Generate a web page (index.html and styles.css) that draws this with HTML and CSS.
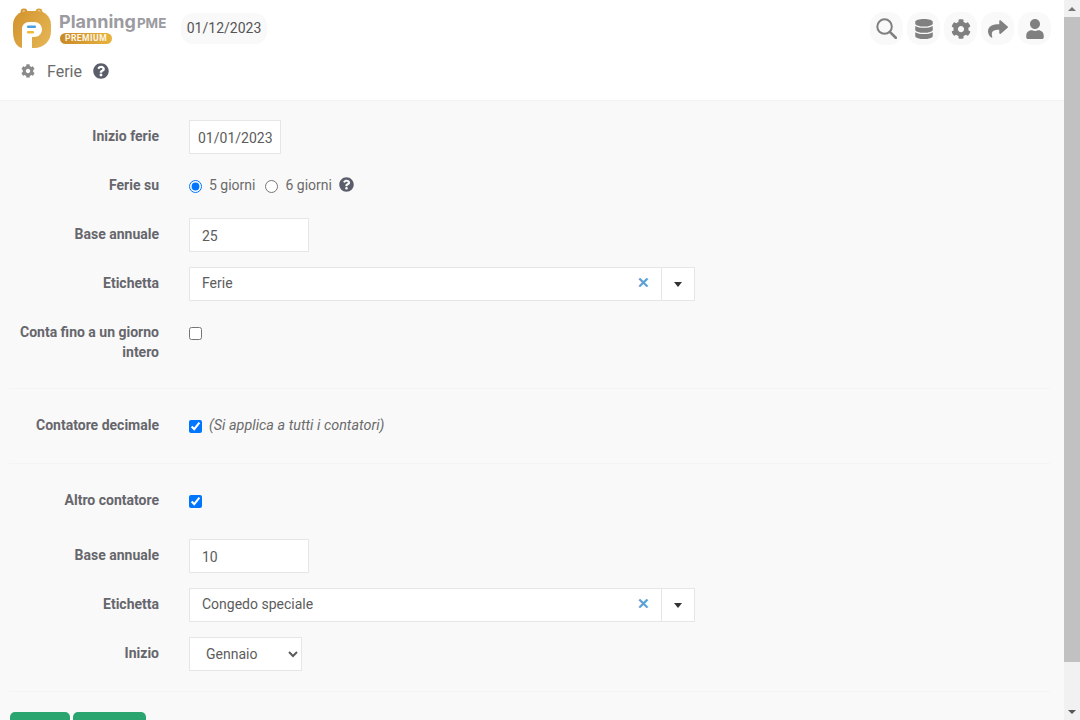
FILE: index.html
```html
<!DOCTYPE html>
<html lang="it">
<head>
    <meta charset="UTF-8">
    <meta name="viewport" content="width=device-width, initial-scale=1.0">
    <title>Ferie</title>
    <link rel="stylesheet" href="styles.css">
</head>
<body>
    <svg class="icon-defs" xmlns="http://www.w3.org/2000/svg">
        <symbol id="i-database" viewBox="0 0 448 512"><path d="M448 73.143v45.714C448 159.143 347.667 192 224 192S0 159.143 0 118.857V73.143C0 32.857 100.333 0 224 0s224 32.857 224 73.143zM448 176v102.857C448 319.143 347.667 352 224 352S0 319.143 0 278.857V176c48.125 33.143 136.208 48.572 224 48.572S399.874 209.143 448 176zm0 160v102.857C448 479.143 347.667 512 224 512S0 479.143 0 438.857V336c48.125 33.143 136.208 48.572 224 48.572S399.874 369.143 448 336z"/></symbol>
        <symbol id="i-cog" viewBox="0 0 512 512"><path d="M487.4 315.7l-42.6-24.6c4.3-23.2 4.3-47 0-70.2l42.6-24.6c4.9-2.8 7.1-8.6 5.5-14-11.1-35.6-30-67.8-54.7-94.6-3.8-4.1-10-5.1-14.8-2.3L380.8 110c-17.9-15.4-38.5-27.3-60.8-35.1V25.8c0-5.6-3.9-10.5-9.4-11.7-36.7-8.2-74.3-7.8-109.2 0-5.5 1.2-9.4 6.1-9.4 11.7V75c-22.2 7.9-42.8 19.8-60.8 35.1L88.7 85.5c-4.9-2.8-11-1.9-14.8 2.3-24.7 26.7-43.6 58.9-54.7 94.6-1.7 5.4.6 11.2 5.5 14L67.3 221c-4.3 23.2-4.3 47 0 70.2l-42.6 24.6c-4.9 2.8-7.1 8.6-5.5 14 11.1 35.6 30 67.8 54.7 94.6 3.8 4.1 10 5.1 14.8 2.3l42.6-24.6c17.9 15.4 38.5 27.3 60.8 35.1v49.2c0 5.6 3.9 10.5 9.4 11.7 36.7 8.2 74.3 7.8 109.2 0 5.5-1.2 9.4-6.1 9.4-11.7v-49.2c22.2-7.9 42.8-19.8 60.8-35.1l42.6 24.6c4.9 2.8 11 1.9 14.8-2.3 24.7-26.7 43.6-58.9 54.7-94.6 1.5-5.5-.7-11.3-5.6-14.1zM256 336c-44.1 0-80-35.9-80-80s35.9-80 80-80 80 35.9 80 80-35.9 80-80 80z"/></symbol>
        <symbol id="i-share" viewBox="0 0 512 512"><path d="M503.691 189.836L327.687 37.851C312.281 24.546 288 35.347 288 56.015v80.053C127.371 137.907 0 170.1 0 322.326c0 61.441 39.581 122.309 83.333 154.132 13.653 9.931 33.111-2.533 28.077-18.631C66.066 312.814 132.917 274.316 288 272.085V360c0 20.7 24.3 31.453 39.687 18.164l176.004-152c11.071-9.562 11.086-26.753 0-36.328z"/></symbol>
        <symbol id="i-user" viewBox="0 0 448 512"><path d="M224 256c70.7 0 128-57.3 128-128S294.7 0 224 0 96 57.3 96 128s57.3 128 128 128zm89.6 32h-16.7c-22.2 10.2-46.9 16-72.9 16s-50.6-5.8-72.9-16h-16.7C60.2 288 0 348.2 0 422.4V464c0 26.5 21.5 48 48 48h352c26.5 0 48-21.5 48-48v-41.6c0-74.2-60.2-134.4-134.4-134.4z"/></symbol>
        <symbol id="i-help" viewBox="0 0 512 512"><path d="M504 256c0 136.997-111.043 248-248 248S8 392.997 8 256C8 119.083 119.043 8 256 8s248 111.083 248 248zM262.655 90c-54.497 0-89.255 22.957-116.549 63.758-3.536 5.286-2.353 12.415 2.715 16.258l34.699 26.31c5.205 3.947 12.621 3.008 16.665-2.122 17.864-22.658 30.113-35.797 57.303-35.797 20.429 0 45.698 13.148 45.698 32.958 0 14.976-12.363 22.667-32.534 33.976C247.128 238.528 216 254.941 216 296v4c0 6.627 5.373 12 12 12h56c6.627 0 12-5.373 12-12v-1.333c0-28.462 83.186-29.647 83.186-106.667 0-58.002-60.165-102-116.531-102zM256 338c-25.365 0-46 20.635-46 46 0 25.364 20.635 46 46 46s46-20.636 46-46c0-25.365-20.635-46-46-46z"/></symbol>
        <linearGradient id="logo-gold" x1="0" y1="0" x2="1" y2="0.6">
            <stop offset="0" stop-color="#d2922c"/>
            <stop offset="1" stop-color="#e3b251"/>
        </linearGradient>
    </svg>

    <div class="page">
        <header class="page-header">
            <div class="topbar">
                <div class="brand">
                    <svg class="brand-logo" viewBox="0 0 38 40">
                        <circle cx="11" cy="4" r="2.6" fill="#f4e3c0" stroke="#d2922c" stroke-width="1.6"/>
                        <circle cx="26" cy="4" r="2.6" fill="#f4e3c0" stroke="#d9a03c" stroke-width="1.6"/>
                        <path d="M14 3h10c8 0 14 6 14 14v6c0 10-7 17-17 17H10C4 40 0 33 0 24v-7C0 9 6 3 14 3z" fill="url(#logo-gold)"/>
                        <path d="M9 21c0-4 3-7 7-7h5c5 0 8 3.500 8 7.500S26 29 21 29h-2v11H9z" fill="#fff"/>
                        <rect x="14" y="17.500" width="9" height="2.400" rx="1" fill="#4a9fe0"/>
                        <rect x="14" y="23" width="7" height="2.400" rx="1" fill="#f0b93a"/>
                    </svg>
                    <div class="brand-text">
                        <div class="brand-name">Planning<span class="brand-suffix">PME</span></div>
                        <span class="brand-badge">PREMIUM</span>
                    </div>
                </div>
                <div class="date-pill">01/12/2023</div>
                <nav class="tools">
                    <a class="tool-btn">
                        <svg class="tool-search" viewBox="0 0 24 24" fill="none" stroke="currentColor" stroke-width="2.3">
                            <circle cx="9.800" cy="9.800" r="8.300"/>
                            <path d="M15.800 15.800L22.600 22.600" stroke-linecap="round" stroke-width="3"/>
                        </svg>
                    </a>
                    <a class="tool-btn"><svg class="tool-icon"><use href="#i-database"/></svg></a>
                    <a class="tool-btn"><svg class="tool-icon"><use href="#i-cog"/></svg></a>
                    <a class="tool-btn"><svg class="tool-icon"><use href="#i-share"/></svg></a>
                    <a class="tool-btn"><svg class="tool-icon"><use href="#i-user"/></svg></a>
                </nav>
            </div>
            <div class="title-row">
                <svg class="title-cog"><use href="#i-cog"/></svg>
                <h1 class="page-title">Ferie</h1>
                <svg class="help-icon help-title"><use href="#i-help"/></svg>
            </div>
        </header>

        <form class="settings">
            <div class="form-row">
                <label class="form-label">Inizio ferie</label>
                <input type="text" class="input input-date" value="01/01/2023">
            </div>
            <div class="form-row">
                <label class="form-label">Ferie su</label>
                <div class="choices">
                    <input type="radio" name="days" class="tick" checked>
                    <span class="choice-text">5 giorni</span>
                    <input type="radio" name="days" class="tick tick-second">
                    <span class="choice-text">6 giorni</span>
                    <svg class="help-icon help-inline"><use href="#i-help"/></svg>
                </div>
            </div>
            <div class="form-row">
                <label class="form-label">Base annuale</label>
                <input type="text" class="input input-number" value="25">
            </div>
            <div class="form-row">
                <label class="form-label">Etichetta</label>
                <div class="combo">
                    <span class="combo-value">Ferie</span>
                    <span class="combo-clear">&#10005;</span>
                    <span class="combo-toggle"><i class="caret"></i></span>
                </div>
            </div>
            <div class="form-row form-row-last">
                <label class="form-label">Conta fino a un giorno intero</label>
                <div class="choices"><input type="checkbox" class="tick"></div>
            </div>

            <hr class="divider">

            <div class="form-row form-row-last">
                <label class="form-label">Contatore decimale</label>
                <div class="choices">
                    <input type="checkbox" class="tick" checked>
                    <em class="choice-note">(Si applica a tutti i contatori)</em>
                </div>
            </div>

            <hr class="divider">

            <div class="form-row form-row-wide">
                <label class="form-label">Altro contatore</label>
                <div class="choices"><input type="checkbox" class="tick" checked></div>
            </div>
            <div class="form-row">
                <label class="form-label">Base annuale</label>
                <input type="text" class="input input-number" value="10">
            </div>
            <div class="form-row">
                <label class="form-label">Etichetta</label>
                <div class="combo">
                    <span class="combo-value">Congedo speciale</span>
                    <span class="combo-clear">&#10005;</span>
                    <span class="combo-toggle"><i class="caret"></i></span>
                </div>
            </div>
            <div class="form-row form-row-last">
                <label class="form-label">Inizio</label>
                <select class="input input-select">
                    <option>Gennaio</option>
                </select>
            </div>

            <hr class="divider">

            <div class="actions">
                <button type="button" class="btn btn-first"></button>
                <button type="button" class="btn btn-second"></button>
            </div>
        </form>
    </div>

    <div class="scrollbar">
        <div class="scroll-arrow"><i class="arrow-up"></i></div>
        <div class="scroll-thumb"></div>
        <div class="scroll-rest"></div>
        <div class="scroll-arrow"><i class="arrow-down"></i></div>
    </div>
</body>
</html>
```

FILE: styles.css
```css
* {
    box-sizing: border-box;
}

html, body {
    height: 100%;
}

body {
    margin: 0;
    display: flex;
    overflow: hidden;
    background: #f9f9f9;
    font-family: Roboto, "Liberation Sans", sans-serif;
    font-size: 14px;
    color: #555;
}

.icon-defs {
    width: 0;
    height: 0;
    display: block;
    flex: none;
}

.page {
    flex: 1;
    min-width: 0;
    height: 100%;
    overflow: hidden;
}

/* header */
.page-header {
    height: 101px;
    background: white;
    border-bottom: 1px solid #f2f2f2;
}

.topbar {
    display: flex;
    align-items: flex-start;
    height: 52px;
    padding: 8px 13px 0 13px;
}

.brand {
    display: flex;
    gap: 8px;
    width: 168px;
}

.brand-logo {
    width: 38px;
    height: 40px;
    flex: none;
}

.brand-text {
    display: flex;
    flex-direction: column;
    align-items: flex-start;
}

.brand-name {
    font-family: Inter, sans-serif;
    font-weight: 700;
    font-size: 18px;
    line-height: 28px;
    height: 25px;
    color: #9b9ba1;
    white-space: nowrap;
}

.brand-suffix {
    font-size: 13.5px;
    margin-left: 1px;
}

.brand-badge {
    width: 52px;
    height: 11px;
    margin-left: 1px;
    border-radius: 6px;
    background: linear-gradient(90deg, #c98a26, #e8b33f);
    color: #fdf6e6;
    font-size: 8.5px;
    font-weight: 700;
    line-height: 11px;
    letter-spacing: 0.5px;
    text-align: center;
}

.date-pill {
    margin-top: 5px;
    width: 86px;
    height: 31px;
    border-radius: 12px;
    background: #f9f9f9;
    color: #555;
    line-height: 31px;
    text-align: center;
}

.tools {
    margin-left: auto;
    display: flex;
    gap: 4px;
    margin-top: 4px;
}

.tool-btn {
    width: 33px;
    height: 33px;
    border-radius: 14px;
    background: #f9f9f9;
    color: #808080;
    display: flex;
    align-items: center;
    justify-content: center;
}

.tool-icon {
    width: 20px;
    height: 20px;
    fill: currentColor;
}

.tool-search {
    width: 21px;
    height: 21px;
}

.title-row {
    display: flex;
    align-items: center;
    height: 38px;
    padding-left: 21px;
}

.title-cog {
    width: 14px;
    height: 14px;
    fill: #8a8a8a;
}

.page-title {
    margin: 0 0 0 12px;
    font-size: 16px;
    font-weight: 400;
    color: #6b6b6b;
}

.help-icon {
    fill: #5a5e6a;
}

.help-title {
    width: 16px;
    height: 16px;
    margin-left: 11px;
    margin-top: -1px;
}

/* form */
.settings {
    padding: 19px 14px 0 9px;
}

.form-row {
    display: flex;
    align-items: flex-start;
    margin-bottom: 15px;
}

.form-row-last {
    margin-bottom: 0;
}

.form-row-wide {
    margin-bottom: 21px;
}

.form-label {
    width: 150px;
    flex: none;
    margin-right: 30px;
    padding: 6px 0;
    text-align: right;
    font-weight: 700;
    line-height: 20px;
    color: #66666c;
}

.input {
    height: 34px;
    border: 1px solid #e6e6e6;
    background: white;
    font-family: inherit;
    font-size: 14px;
    color: #5c5c5c;
    outline: none;
}

.input-date {
    width: 92px;
    padding: 1px 8px 0 8px;
}

.input-number {
    width: 120px;
    padding: 1px 12px 0 12px;
}

.input-select {
    width: 113px;
    padding: 0 12px;
}

.choices {
    display: flex;
    align-items: center;
    height: 34px;
}

.tick {
    margin: 1px 0 0 0;
    width: 13px;
    height: 13px;
}

.tick-second {
    margin-left: 10px;
}

.choice-text {
    margin: -2px 0 0 7px;
    color: #6b6b6b;
}

.choice-note {
    margin: -2px 0 0 7px;
    font-size: 14.4px;
    color: #6b6b6b;
}

.help-inline {
    width: 15px;
    height: 15px;
    margin: -3px 0 0 7px;
}

.combo {
    display: flex;
    align-items: center;
    width: 506px;
    height: 34px;
    border: 1px solid #e6e6e6;
    background: white;
}

.combo-value {
    flex: 1;
    margin-top: -2px;
    padding-left: 12px;
    color: #5c5c5c;
}

.combo-clear {
    width: 36px;
    margin-top: -2px;
    text-align: center;
    font-size: 15px;
    font-weight: 700;
    color: #5a9fd6;
}

.combo-toggle {
    width: 33px;
    height: 100%;
    border-left: 1px solid #e6e6e6;
    display: flex;
    align-items: center;
    justify-content: center;
}

.caret {
    border-style: solid;
    border-width: 5px 4.5px 0 4.5px;
    border-color: #333 transparent transparent transparent;
}

.divider {
    margin: 20px 0;
    border: none;
    border-top: 1px solid #f4f4f4;
}

.actions {
    display: flex;
    gap: 3px;
    margin-left: 1px;
}

.btn {
    height: 34px;
    border: none;
    border-radius: 5px;
    background-color: #2ba56f;
}

.btn-first {
    width: 60px;
}

.btn-second {
    width: 73px;
}

/* window scrollbar */
.scrollbar {
    width: 16px;
    flex: none;
    height: 100%;
    display: flex;
    flex-direction: column;
    background: #f1f1f1;
}

.scroll-arrow {
    height: 17px;
    flex: none;
    display: flex;
    align-items: center;
    justify-content: center;
}

.arrow-up {
    border-style: solid;
    border-width: 0 4px 4px 4px;
    border-color: transparent transparent #777 transparent;
}

.arrow-down {
    border-style: solid;
    border-width: 4px 4px 0 4px;
    border-color: #555 transparent transparent transparent;
}

.scroll-thumb {
    height: 645px;
    flex: none;
    background: #c1c1c1;
}

.scroll-rest {
    flex: 1;
}
```
